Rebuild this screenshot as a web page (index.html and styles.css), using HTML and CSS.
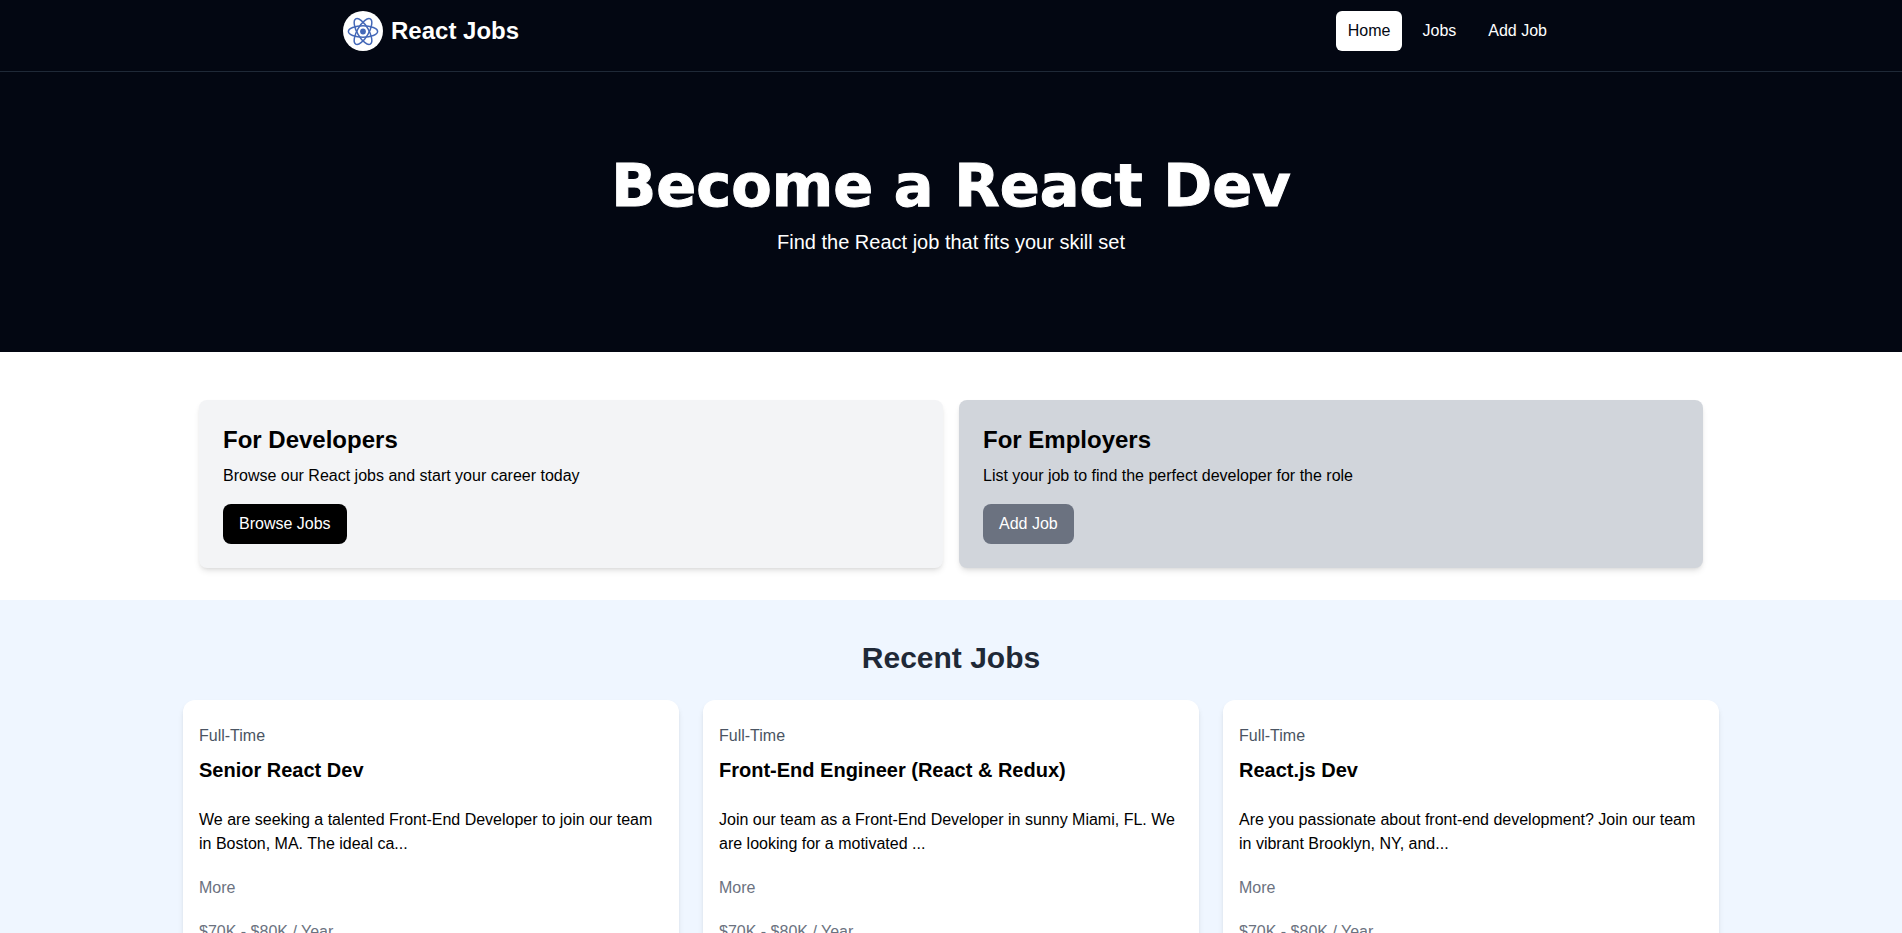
FILE: index.html
```html
<!DOCTYPE html>
<html lang="en">
<head>
<meta charset="utf-8">
<meta name="viewport" content="width=device-width, initial-scale=1">
<title>React Jobs</title>
<link rel="stylesheet" href="styles.css">
</head>
<body>
<header class="navbar">
  <div class="navbar-inner">
    <a class="brand" href="#">
      <svg class="brand-logo" viewBox="0 0 40 40" aria-hidden="true">
        <circle cx="20" cy="20" r="20" fill="#fff"/>
        <g fill="none" stroke="#4468b8" stroke-width="1.5">
          <ellipse cx="20" cy="20.500" rx="14.600" ry="5.700"/>
          <ellipse cx="20" cy="20.500" rx="14.600" ry="5.700" transform="rotate(60 20 20.500)"/>
          <ellipse cx="20" cy="20.500" rx="14.600" ry="5.700" transform="rotate(120 20 20.500)"/>
        </g>
        <circle cx="20" cy="20.500" r="2.900" fill="#4468b8"/>
      </svg>
      <span class="brand-name">React Jobs</span>
    </a>
    <nav class="nav-links">
      <a class="nav-link nav-link-active" href="#">Home</a>
      <a class="nav-link" href="#jobs">Jobs</a>
      <a class="nav-link" href="#add-job">Add Job</a>
    </nav>
  </div>
</header>
<main>
  <section class="hero">
    <h1 class="hero-title">Become a React Dev</h1>
    <p class="hero-text">Find the React job that fits your skill set</p>
  </section>
  <section class="audiences">
    <div class="audience audience-developers">
      <h2 class="audience-title">For Developers</h2>
      <p class="audience-text">Browse our React jobs and start your career today</p>
      <a class="button button-dark" href="#jobs">Browse Jobs</a>
    </div>
    <div class="audience audience-employers">
      <h2 class="audience-title">For Employers</h2>
      <p class="audience-text">List your job to find the perfect developer for the role</p>
      <a class="button button-gray" href="#add-job">Add Job</a>
    </div>
  </section>
  <section class="recent" id="jobs">
    <h2 class="recent-title">Recent Jobs</h2>
    <div class="job-grid">
      <article class="job">
        <div class="job-type">Full-Time</div>
        <h3 class="job-title">Senior React Dev</h3>
        <p class="job-text">We are seeking a talented Front-End Developer to join our team in Boston, MA. The ideal ca...</p>
        <button class="job-more" type="button">More</button>
        <p class="job-salary">$70K - $80K / Year</p>
      </article>
      <article class="job">
        <div class="job-type">Full-Time</div>
        <h3 class="job-title">Front-End Engineer (React &amp; Redux)</h3>
        <p class="job-text">Join our team as a Front-End Developer in sunny Miami, FL. We are looking for a motivated ...</p>
        <button class="job-more" type="button">More</button>
        <p class="job-salary">$70K - $80K / Year</p>
      </article>
      <article class="job">
        <div class="job-type">Full-Time</div>
        <h3 class="job-title">React.js Dev</h3>
        <p class="job-text">Are you passionate about front-end development? Join our team in vibrant Brooklyn, NY, and...</p>
        <button class="job-more" type="button">More</button>
        <p class="job-salary">$70K - $80K / Year</p>
      </article>
    </div>
  </section>
</main>
</body>
</html>
```
FILE: styles.css
```css
* { box-sizing: border-box; margin: 0; }

body {
  background: #fff;
  color: #000;
  font: 16px/24px "Liberation Sans", Arial, sans-serif;
}

a { color: inherit; text-decoration: none; }

.navbar {
  background: #030712;
  border-bottom: 1px solid #1f2937;
  color: #fff;
}

.navbar-inner {
  display: flex;
  justify-content: space-between;
  max-width: 1280px;
  margin: 0 auto;
  padding: 11px 32px 20px;
}

.brand { display: flex; align-items: center; gap: 8px; }
.brand-logo { width: 40px; height: 40px; }
.brand-name { font-size: 24px; line-height: 32px; font-weight: 700; }

.nav-links { display: flex; gap: 8px; }
.nav-link { padding: 8px 12px; border-radius: 6px; }
.nav-link-active { background: #fff; color: #030712; }

.hero {
  background: #030712;
  color: #fff;
  padding: 84px 16px 96px;
  text-align: center;
}
.hero-title {
  font-family: "Arial Black", "DejaVu Sans", sans-serif;
  font-size: 59px;
  line-height: 60px;
  font-weight: 700;
  -webkit-text-stroke: 1px #fff;
}
.hero-text { margin-top: 12px; font-size: 20px; line-height: 28px; }

.audiences {
  display: grid;
  grid-template-columns: 1fr 1fr;
  gap: 16px;
  max-width: 1536px;
  margin: 0 auto;
  padding: 48px 16px 32px;
}
.audience {
  padding: 24px;
  border-radius: 8px;
  box-shadow: 0 4px 6px -1px rgba(0, 0, 0, 0.1), 0 2px 4px -2px rgba(0, 0, 0, 0.1);
}
.audience-developers { background: #f3f4f6; }
.audience-employers { background: #d1d5db; }
.audience-title { font-size: 24px; line-height: 32px; }
.audience-text { margin: 8px 0 16px; }

.button {
  display: inline-block;
  padding: 8px 16px;
  border-radius: 8px;
  color: #fff;
}
.button-dark { background: #000; }
.button-gray { background: #6b7280; }

.recent { background: #eff6ff; padding: 40px 16px; }
.recent-title {
  margin-bottom: 24px;
  color: #1f2937;
  font-size: 30px;
  line-height: 36px;
  text-align: center;
}
.job-grid {
  display: grid;
  grid-template-columns: repeat(3, 1fr);
  gap: 24px;
  max-width: 1536px;
  margin: 0 auto;
}
.job {
  padding: 24px 16px;
  border-radius: 12px;
  background: #fff;
  box-shadow: 0 4px 6px -1px rgba(0, 0, 0, 0.1), 0 2px 4px -2px rgba(0, 0, 0, 0.1);
}
.job-type { margin-bottom: 8px; color: #4b5563; }
.job-title { margin-bottom: 24px; font-size: 20px; line-height: 28px; }
.job-text { margin-bottom: 20px; }
.job-more {
  display: block;
  margin-bottom: 20px;
  padding: 0;
  border: 0;
  background: none;
  color: #6b7280;
  font: inherit;
}
.job-salary { color: #6b7280; }
```
